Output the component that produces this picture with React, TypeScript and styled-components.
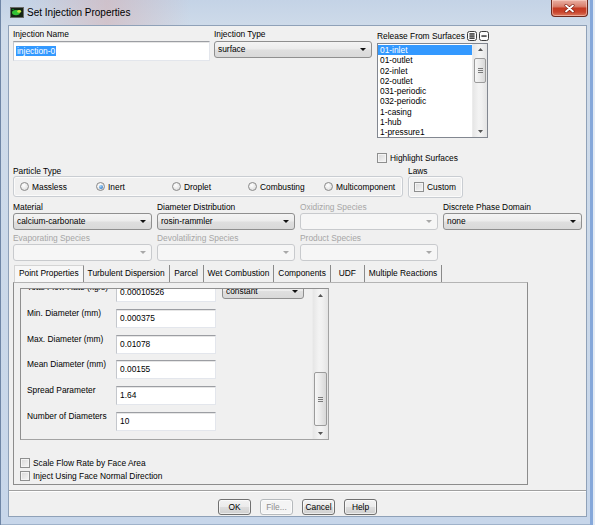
import React from "react"
import styled, { createGlobalStyle, css } from "styled-components"

const GlobalStyle = createGlobalStyle`
  html, body {
    margin: 0;
    padding: 0;
  }
  body {
    width: 595px;
    height: 525px;
    overflow: hidden;
    background: #c8d6e8;
    font-family: "Liberation Sans", Arial, sans-serif;
  }
`

const surfaces = [
  "01-inlet",
  "01-outlet",
  "02-inlet",
  "02-outlet",
  "031-periodic",
  "032-periodic",
  "1-casing",
  "1-hub",
  "1-pressure1",
]

const particleTypes = [
  { label: "Massless" },
  { label: "Inert", checked: true },
  { label: "Droplet" },
  { label: "Combusting" },
  { label: "Multicomponent" },
]

const speciesFields = [
  { label: "Material", value: "calcium-carbonate" },
  { label: "Diameter Distribution", value: "rosin-rammler" },
  { label: "Oxidizing Species", disabled: true },
  { label: "Discrete Phase Domain", value: "none" },
  { label: "Evaporating Species", disabled: true },
  { label: "Devolatilizing Species", disabled: true },
  { label: "Product Species", disabled: true },
]

const tabs = [
  "Point Properties",
  "Turbulent Dispersion",
  "Parcel",
  "Wet Combustion",
  "Components",
  "UDF",
  "Multiple Reactions",
]

const pointRows = [
  { label: "Total Flow Rate (kg/s)", value: "0.00010526", combo: "constant" },
  { label: "Min. Diameter (mm)", value: "0.000375" },
  { label: "Max. Diameter (mm)", value: "0.01078" },
  { label: "Mean Diameter (mm)", value: "0.00155" },
  { label: "Spread Parameter", value: "1.64" },
  { label: "Number of Diameters", value: "10" },
]

const buttons = [
  { label: "OK" },
  { label: "File...", disabled: true },
  { label: "Cancel" },
  { label: "Help" },
]

export default function App() {
  return (
    <>
      <GlobalStyle />
      <Window>
        <TitleBar>
          <AppIcon width="14" height="11" viewBox="0 0 14 11">
            <rect x="0.5" y="0.5" width="13" height="10" fill="#142414" stroke="#6a6a6a" />
            <ellipse cx="6" cy="5.6" rx="4" ry="2.6" fill="#33c236" />
            <ellipse cx="9.2" cy="4.4" rx="2" ry="1.4" fill="#c3ea45" />
            <rect x="2" y="2" width="2" height="1" fill="#0d7a1a" />
          </AppIcon>
          <TitleText>Set Injection Properties</TitleText>
          <CloseButton>
            <svg width="11" height="9" viewBox="0 0 11 9">
              <path d="M2 1.5 L9 7.5 M9 1.5 L2 7.5" stroke="#7a1e12" strokeWidth="3" strokeLinecap="round" />
              <path d="M2 1.5 L9 7.5 M9 1.5 L2 7.5" stroke="#ffffff" strokeWidth="1.8" strokeLinecap="round" />
            </svg>
          </CloseButton>
        </TitleBar>

        <Client>
          <TopRow>
            <Field $width={197} $top={0}>
              <Label>Injection Name</Label>
              <LineEdit $height={20}>
                <Selection>injection-0</Selection>
              </LineEdit>
            </Field>
            <Field $width={158} $top={0}>
              <Label>Injection Type</Label>
              <Combo value="surface" />
            </Field>
            <Field $width={111} $top={2}>
              <LabelRow>
                <Label>Release From Surfaces</Label>
                <ListIcon lines={[2.3, 4.4, 6.5]} />
                <ListIcon lines={[4.4]} />
              </LabelRow>
              <ListBox>
                <ListItems>
                  {surfaces.map((s, i) => (
                    <ListItem key={s} $selected={i === 0}>
                      {s}
                    </ListItem>
                  ))}
                </ListItems>
                <VScrollbar offset={3} thumb={25} />
              </ListBox>
              <CheckRow $top={13}>
                <CheckBox />
                <span>Highlight Surfaces</span>
              </CheckRow>
            </Field>
          </TopRow>

          <GroupRow>
            <Field $width={390} $top={0}>
              <GroupLabel>Particle Type</GroupLabel>
              <GroupBox $height={21}>
                <RadioGrid>
                  {particleTypes.map((p) => (
                    <RadioOption key={p.label}>
                      <Radio $checked={p.checked} />
                      <span>{p.label}</span>
                    </RadioOption>
                  ))}
                </RadioGrid>
              </GroupBox>
            </Field>
            <Field $width={55} $top={0}>
              <GroupLabel>Laws</GroupLabel>
              <GroupBox $height={22}>
                <CheckRow $top={0} $left={5}>
                  <CheckBox />
                  <span>Custom</span>
                </CheckRow>
              </GroupBox>
            </Field>
          </GroupRow>

          <SpeciesGrid>
            {speciesFields.map((f) => (
              <Field key={f.label} $top={0}>
                <Label $disabled={f.disabled}>{f.label}</Label>
                <Combo value={f.value} disabled={f.disabled} />
              </Field>
            ))}
          </SpeciesGrid>

          <TabBar>
            {tabs.map((t, i) => (
              <Tab key={t} $active={i === 0}>
                {t}
              </Tab>
            ))}
          </TabBar>
          <TabPane>
            <ScrollArea>
              <Viewport>
                <PropertyGrid>
                  {pointRows.map((r) => (
                    <React.Fragment key={r.label}>
                      <PropLabel>{r.label}</PropLabel>
                      <LineEdit $height={19}>{r.value}</LineEdit>
                      {r.combo ? (
                        <ComboCell>
                          <Combo value={r.combo} height={16} />
                        </ComboCell>
                      ) : (
                        <span />
                      )}
                    </React.Fragment>
                  ))}
                </PropertyGrid>
              </Viewport>
              <VScrollbar offset={71} thumb={54} big />
            </ScrollArea>
            <CheckList>
              <CheckRow $top={0}>
                <CheckBox />
                <span>Scale Flow Rate by Face Area</span>
              </CheckRow>
              <CheckRow $top={0}>
                <CheckBox />
                <span>Inject Using Face Normal Direction</span>
              </CheckRow>
            </CheckList>
          </TabPane>

          <Separator />
          <ButtonRow>
            {buttons.map((b) => (
              <Button key={b.label} $disabled={b.disabled}>
                {b.label}
              </Button>
            ))}
          </ButtonRow>
        </Client>
      </Window>
    </>
  )
}

const Combo = ({ value, disabled, height }: { value?: string; disabled?: boolean; height?: number }) => (
  <ComboBox $disabled={disabled} $height={height ?? 17}>
    <ComboText>{value}</ComboText>
    <ComboArrow $disabled={disabled} />
  </ComboBox>
)

const ListIcon = ({ lines }: { lines: number[] }) => (
  <IconSvg width="10" height="10" viewBox="0 0 10 10">
    <rect x="0.5" y="0.5" width="9" height="9" rx="2" fill="#fbfbfb" stroke="#3c3c3c" />
    {lines.map((y) => (
      <rect key={y} x="2.4" y={y} width="5.2" height="1.3" fill="#151515" />
    ))}
  </IconSvg>
)

const VScrollbar = ({ offset, thumb, big }: { offset: number; thumb: number; big?: boolean }) => (
  <ScrollBar $big={big}>
    <ScrollArrow $big={big}>
      <svg width="5" height="3" viewBox="0 0 5 3">
        <path d="M0 3 L2.5 0 L5 3 Z" fill="#555" />
      </svg>
    </ScrollArrow>
    <ScrollTrack $offset={offset}>
      <ScrollThumb $height={thumb}>
        <Grip />
        <Grip />
        <Grip />
      </ScrollThumb>
    </ScrollTrack>
    <ScrollArrow $big={big}>
      <svg width="5" height="3" viewBox="0 0 5 3">
        <path d="M0 0 L2.5 3 L5 0 Z" fill="#555" />
      </svg>
    </ScrollArrow>
  </ScrollBar>
)

const Window = styled.div`
  width: 595px;
  height: 525px;
  display: flex;
  flex-direction: column;
  background: linear-gradient(to bottom, #c4d3e6 0%, #d0dcea 6%, #cad8e9 60%, #c7d6ea 100%);
  box-shadow:
    inset 1px 0 0 #6f86a6,
    inset -2px 0 0 #e3ebf5,
    inset -5px 0 0 #86a8da,
    inset 0 -1px 0 #9fb2ca;
`

const TitleBar = styled.div`
  height: 25px;
  flex: none;
  display: flex;
  align-items: flex-start;
  padding-left: 10px;
  background: linear-gradient(to right, rgba(210, 190, 195, 0) 5%, rgba(214, 178, 180, 0.55) 18%, rgba(210, 190, 195, 0) 32%);
`

const AppIcon = styled.svg`
  margin-top: 7px;
  flex: none;
`

const TitleText = styled.span`
  margin: 6px 0 0 3px;
  font-size: 10px;
  line-height: 14px;
  color: #000;
`

const CloseButton = styled.div`
  margin: 0 7px 0 auto;
  width: 37px;
  height: 17px;
  box-sizing: border-box;
  border: 1px solid #6e2a1f;
  border-top: none;
  border-radius: 0 0 4px 4px;
  background: linear-gradient(#eab0a3 0%, #d9806e 40%, #c43a22 52%, #c9442c 75%, #dc7a5e 100%);
  box-shadow: inset 0 0 0 1px rgba(255, 220, 210, 0.5);
  display: flex;
  align-items: center;
  justify-content: center;
`

const Client = styled.div`
  flex: 1;
  margin: 0 8px 8px 8px;
  box-sizing: border-box;
  background: #f0f0f0;
  border: 1px solid #8fa1b8;
  padding: 3px 4px 0 4px;
  display: flex;
  flex-direction: column;
  font-size: 8.4px;
  line-height: 10px;
  color: #000;
`

const TopRow = styled.div`
  display: flex;
  align-items: flex-start;
  gap: 4px;
  & > :last-child {
    margin-left: 1px;
  }
`

const Field = styled.div<{ $width?: number; $top: number }>`
  display: flex;
  flex-direction: column;
  gap: 2px;
  ${(p) => p.$width && `width: ${p.$width}px;`}
  margin-top: ${(p) => p.$top}px;
  min-width: 0;
`

const Label = styled.span<{ $disabled?: boolean }>`
  height: 10px;
  white-space: nowrap;
  color: ${(p) => (p.$disabled ? "#a6a6a6" : "#000")};
`

const LabelRow = styled.div`
  display: flex;
  align-items: center;
  gap: 2px;
  height: 10px;
`

const IconSvg = styled.svg`
  flex: none;
`

const LineEdit = styled.div<{ $height: number }>`
  box-sizing: border-box;
  height: ${(p) => p.$height}px;
  display: flex;
  align-items: center;
  padding: 0 3px 1px 3px;
  background: #fff;
  border: 1px solid #e3e6ec;
  border-top-color: #9c9ea3;
  border-left-color: #c4c7cc;
  box-shadow: inset 0 1px 0 #e6e6e6;
  white-space: nowrap;
  overflow: hidden;
`

const Selection = styled.span`
  background: #3399ff;
  color: #fff;
  padding: 0 1px;
  margin-left: -1px;
`

const ComboBox = styled.div<{ $disabled?: boolean; $height: number }>`
  box-sizing: border-box;
  height: ${(p) => p.$height}px;
  display: flex;
  align-items: center;
  padding: 0 5px 1px 3px;
  border: 1px solid ${(p) => (p.$disabled ? "#c8cacd" : "#8f8f8f")};
  border-radius: 3px;
  background: ${(p) =>
    p.$disabled
      ? "#f6f6f6"
      : "linear-gradient(#f4f4f4 0%, #ececec 48%, #dfdfdf 52%, #d9d9d9 100%)"};
  color: #000;
`

const ComboText = styled.span`
  flex: 1;
  white-space: nowrap;
  overflow: hidden;
`

const ComboArrow = styled.span<{ $disabled?: boolean }>`
  width: 0;
  height: 0;
  border-left: 3px solid transparent;
  border-right: 3px solid transparent;
  border-top: 3px solid ${(p) => (p.$disabled ? "#a8a8a8" : "#111")};
  margin-top: 1px;
`

const ListBox = styled.div`
  box-sizing: border-box;
  height: 95px;
  display: flex;
  border: 1px solid #828790;
  background: #fff;
`

const ListItems = styled.div`
  flex: 1;
  display: flex;
  flex-direction: column;
  padding-top: 1px;
`

const ListItem = styled.div<{ $selected?: boolean }>`
  height: 10.26px;
  line-height: 10.26px;
  padding-left: 2px;
  white-space: nowrap;
  ${(p) =>
    p.$selected &&
    css`
      background: #3399ff;
      color: #fff;
    `}
`

const ScrollBar = styled.div<{ $big?: boolean }>`
  width: ${(p) => (p.$big ? 15 : 14)}px;
  flex: none;
  display: flex;
  flex-direction: column;
  background: linear-gradient(to right, #e6e6e6, #f3f3f3 40%, #f1f1f1 60%, #e4e4e4);
  border-left: 1px solid #ececec;
`

const ScrollArrow = styled.div<{ $big?: boolean }>`
  height: ${(p) => (p.$big ? 12 : 11)}px;
  flex: none;
  display: flex;
  align-items: center;
  justify-content: center;
`

const ScrollTrack = styled.div<{ $offset: number }>`
  flex: 1;
  padding-top: ${(p) => p.$offset}px;
`

const ScrollThumb = styled.div<{ $height: number }>`
  box-sizing: border-box;
  height: ${(p) => p.$height}px;
  margin: 0 1px;
  border: 1px solid #9b9b9b;
  border-radius: 2px;
  background: linear-gradient(to right, #f6f6f6, #e9e9e9 50%, #d8d8d8);
  display: flex;
  flex-direction: column;
  align-items: center;
  justify-content: center;
  gap: 1px;
`

const Grip = styled.span`
  width: 5px;
  height: 1px;
  background: #7a7a7a;
`

const CheckRow = styled.div<{ $top: number; $left?: number }>`
  display: flex;
  align-items: center;
  gap: 3px;
  height: 10px;
  margin-top: ${(p) => p.$top}px;
  margin-left: ${(p) => p.$left ?? 0}px;
  white-space: nowrap;
`

const CheckBox = styled.span`
  box-sizing: border-box;
  width: 10px;
  height: 10px;
  flex: none;
  border: 1px solid #8e8f8f;
  background: linear-gradient(135deg, #d8d8d8, #f6f6f6);
  box-shadow: inset 0 0 0 1px #f4f4f4;
`

const GroupRow = styled.div`
  display: flex;
  gap: 5px;
  margin-top: 4px;
`

const GroupLabel = styled.span`
  height: 9px;
  line-height: 9px;
  white-space: nowrap;
`

const GroupBox = styled.div<{ $height: number }>`
  box-sizing: border-box;
  height: ${(p) => p.$height}px;
  margin-top: -2px;
  border: 1px solid #c9cdd2;
  border-radius: 3px;
  box-shadow: inset 0 0 0 1px #fbfbfb;
  display: flex;
  align-items: center;
`

const RadioGrid = styled.div`
  display: grid;
  grid-template-columns: repeat(5, 76px);
  padding-left: 6px;
`

const RadioOption = styled.div`
  display: flex;
  align-items: center;
  gap: 3px;
  white-space: nowrap;
`

const Radio = styled.span<{ $checked?: boolean }>`
  box-sizing: border-box;
  width: 9px;
  height: 9px;
  flex: none;
  border-radius: 50%;
  border: 1px solid #8a8a8a;
  background: radial-gradient(circle at 40% 35%, #ffffff, #d6d6d6);
  display: flex;
  align-items: center;
  justify-content: center;
  ${(p) =>
    p.$checked &&
    css`
      &::after {
        content: "";
        width: 4px;
        height: 4px;
        border-radius: 50%;
        background: radial-gradient(circle at 35% 30%, #a9dcff, #1a5fb4);
      }
    `}
`

const SpeciesGrid = styled.div`
  display: grid;
  grid-template-columns: 139px 138px 138px 139px;
  column-gap: 5px;
  row-gap: 3px;
  margin-top: 4px;
  & > div {
    gap: 1px;
  }
`

const TabBar = styled.div`
  display: flex;
  height: 17px;
  margin: 4px 0 0 1px;
`

const Tab = styled.div<{ $active?: boolean }>`
  box-sizing: border-box;
  height: 17px;
  min-width: 34px;
  padding: 0 4px;
  line-height: 16px;
  text-align: center;
  white-space: nowrap;
  border-right: 1px solid #8a8a8a;
  ${(p) =>
    p.$active &&
    css`
      background: #f7f7f7;
      border-left: 1px solid #d4d4d4;
      border-top: 1px solid #d4d4d4;
      line-height: 15px;
    `}
`

const TabPane = styled.div`
  box-sizing: border-box;
  width: 515px;
  height: 203px;
  border: 1px solid #8c8c8c;
  border-top-color: #b4b4b4;
  padding: 5px 0 0 6px;
  display: flex;
  flex-direction: column;
`

const ScrollArea = styled.div`
  box-sizing: border-box;
  width: 309px;
  height: 152px;
  flex: none;
  display: flex;
  border: 1px solid #a3a3a3;
  border-top-color: #8f8f8f;
  border-left-color: #8f8f8f;
`

const Viewport = styled.div`
  flex: 1;
  overflow: hidden;
`

const PropertyGrid = styled.div`
  display: grid;
  grid-template-columns: 89px 100px 88px;
  grid-auto-rows: 19px;
  row-gap: 6.8px;
  margin-top: -6px;
  padding-left: 6px;
`

const PropLabel = styled.span`
  line-height: 9px;
  white-space: nowrap;
`

const ComboCell = styled.div`
  padding-left: 6px;
`

const CheckList = styled.div`
  display: flex;
  flex-direction: column;
  gap: 3px;
  margin-top: 18px;
`

const Separator = styled.div`
  margin: 5px -4px 0 -4px;
  border-top: 1px solid #a0a0a0;
  border-bottom: 1px solid #ffffff;
`

const ButtonRow = styled.div`
  display: flex;
  gap: 9px;
  margin: 7px 0 0 205px;
`

const Button = styled.div<{ $disabled?: boolean }>`
  box-sizing: border-box;
  width: 33px;
  height: 16px;
  line-height: 14px;
  text-align: center;
  border: 1px solid ${(p) => (p.$disabled ? "#b5b9bc" : "#707070")};
  border-radius: 3px;
  background: ${(p) =>
    p.$disabled
      ? "#f4f4f4"
      : "linear-gradient(#f2f2f2 0%, #ebebeb 50%, #dddddd 51%, #cfcfcf 100%)"};
  color: ${(p) => (p.$disabled ? "#8d8d8d" : "#000")};
  box-shadow: inset 0 0 0 1px rgba(255, 255, 255, 0.6);
`
